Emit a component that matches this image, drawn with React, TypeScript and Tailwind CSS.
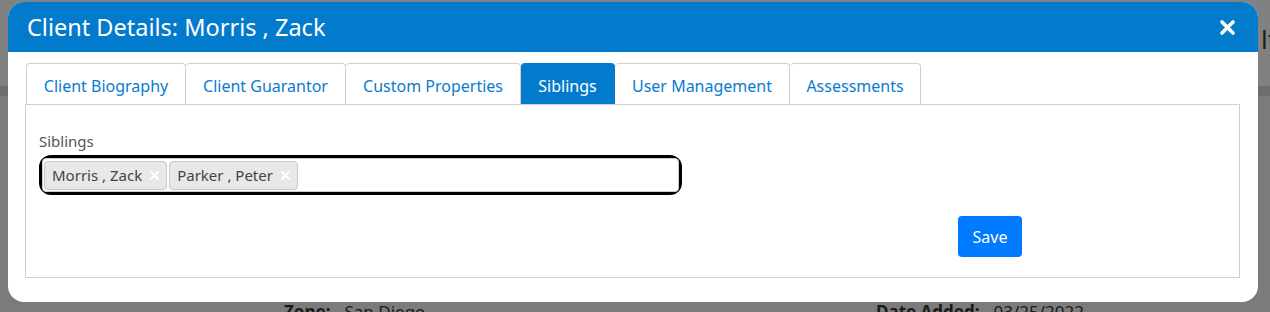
import { useState } from "react";

const tabs = [
  { label: "Client Biography", w: "w-[160px]" },
  { label: "Client Guarantor", w: "w-[160px]" },
  { label: "Custom Properties", w: "w-[175px]" },
  { label: "Siblings", w: "w-[94px]" },
  { label: "User Management", w: "w-[175px]" },
  { label: "Assessments", w: "w-[131px]" },
];

const siblings = ["Morris , Zack", "Parker , Peter"];

const CloseIcon = () => (
  <svg width="17" height="17" viewBox="0 0 17 17" fill="none">
    <path d="M3 3 L14 14 M14 3 L3 14" stroke="#ffffff" strokeWidth="3.6" strokeLinecap="round" />
  </svg>
);

const ChipX = () => (
  <svg width="9" height="9" viewBox="0 0 9 9" fill="none">
    <path d="M1 1 L8 8 M8 1 L1 8" stroke="#ffffff" strokeWidth="2" strokeLinecap="round" />
  </svg>
);

const Chip = ({ name }: { name: string }) => (
  <div className="flex items-center h-[29px] pl-[7px] pr-[7px] bg-[#e8e8e8] border border-[#c8c8c8] rounded-[4px] text-[15px] text-[#444]">
    <span>{name}</span>
    <span className="ml-[8px] flex items-center">
      <ChipX />
    </span>
  </div>
);

const App = () => {
  const [active, setActive] = useState("Siblings");

  return (
    <div className="relative w-[1270px] h-[312px] overflow-hidden bg-[#7b7b7b] font-['Noto_Sans','Open_Sans',sans-serif]">
      {/* page behind the overlay */}
      <div className="absolute inset-0 flex flex-col">
        <div className="h-[86px] bg-[#818181] flex justify-end">
          <span className="mt-[20px] text-[26px] text-[#1e1e1e] w-[9px] overflow-visible">lt</span>
        </div>
        <div className="h-[10px] bg-[#6d6d6d]" />
        <div className="flex-1 relative">
          <div className="absolute top-[203px] left-[284px] flex gap-[14px] text-[17px] text-[#1a1a1a]">
            <span className="font-bold">Zone:</span>
            <span>San Diego</span>
          </div>
          <div className="absolute top-[203px] left-[876px] flex gap-[14px] text-[17px] text-[#1a1a1a]">
            <span className="font-bold">Date Added:</span>
            <span>03/25/2022</span>
          </div>
        </div>
      </div>

      {/* modal */}
      <div className="absolute left-[8px] top-[2px] w-[1250px] h-[300px] bg-white rounded-[16px] overflow-hidden flex flex-col">
        <div className="h-[50px] bg-[#037bcd] flex items-center justify-between pl-[19px] pr-[22px]">
          <h2 className="text-[23.5px] text-white leading-none pt-[2px]">Client Details: Morris , Zack</h2>
          <button className="flex items-center">
            <CloseIcon />
          </button>
        </div>

        <div className="flex-1 pt-[11px] pl-[17px] pr-[18px] pb-[24px] flex flex-col">
          <div className="flex pl-[1px]">
            {tabs.map((t, i) => (
              <button
                key={t.label}
                onClick={() => setActive(t.label)}
                className={`${t.w} h-[41px] pt-[3px] flex items-center justify-center text-[16px] border-t border-r rounded-t-[4px] ${
                  i === 0 ? "border-l" : ""
                } ${
                  active === t.label
                    ? "bg-[#037bcd] border-[#037bcd] text-white"
                    : "bg-white border-[#cfcfcf] text-[#0b7ad0]"
                }`}
              >
                {t.label}
              </button>
            ))}
          </div>

          <div className="flex-1 border border-[#cfcfcf] pt-[26px] pl-[13px]">
            <label className="block text-[15px] leading-[20px] text-[#555]">Siblings</label>
            <div className="mt-[4px] w-[643px] h-[40px] bg-black rounded-[12px] p-[3px]">
              <div className="h-full bg-white border border-[#cccccc] rounded-[4px] flex items-center gap-[2px] pl-[1px]">
                {siblings.map((s) => (
                  <Chip key={s} name={s} />
                ))}
              </div>
            </div>
            <button className="mt-[21px] ml-[919px] w-[64px] h-[41px] bg-[#007bff] rounded-[4px] text-white text-[16px]">
              Save
            </button>
          </div>
        </div>
      </div>
    </div>
  );
};

export default App;
